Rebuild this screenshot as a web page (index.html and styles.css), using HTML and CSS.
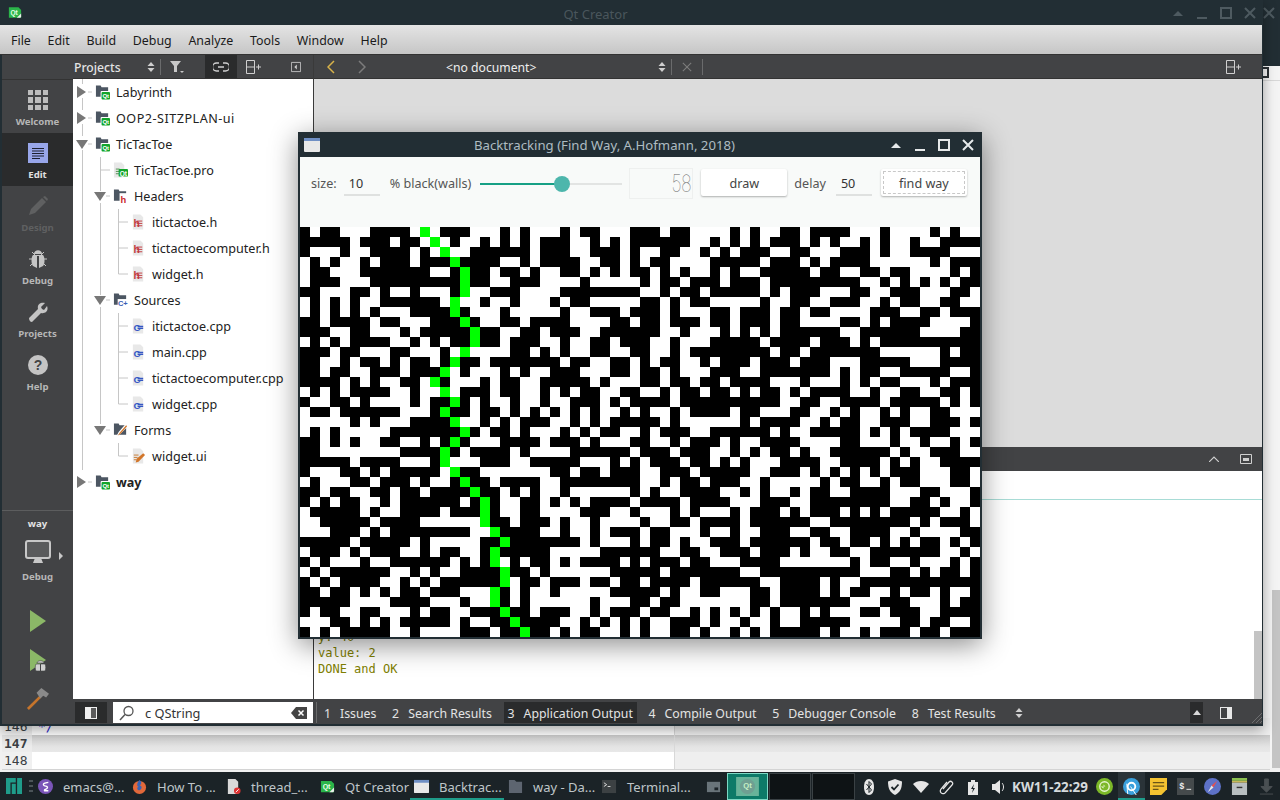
FILE: index.html
```html
<!DOCTYPE html>
<html lang="en">
<head>
<meta charset="utf-8">
<title>Qt Creator</title>
<link rel="stylesheet" href="styles.css">
</head>
<body>
<svg class="defs" width="0" height="0">
  <symbol id="qtfolder" viewBox="0 0 16 16"><path d="M1 1h5l1 2h7v10H1z" fill="#4c5662"/><rect x="6" y="7" width="10" height="9" rx="1" fill="#fff"/><rect x="7" y="8" width="9" height="8" rx="1" fill="#12a52b"/><text x="11.500" y="14.500" font-size="6.500" font-weight="700" text-anchor="middle" fill="#fff" font-family="Liberation Sans">Qt</text></symbol>
  <symbol id="hfolder" viewBox="0 0 16 16"><path d="M1 1h5l1 2h7v10H1z" fill="#4c5662"/><rect x="7" y="5" width="8" height="11" fill="#fff"/><text x="11" y="15" font-size="10" font-weight="700" text-anchor="middle" fill="#c9282d" font-family="Liberation Sans">h</text></symbol>
  <symbol id="cfolder" viewBox="0 0 16 16"><path d="M1 1h5l1 2h7v10H1z" fill="#4c5662"/><rect x="5" y="7" width="11" height="8" fill="#fff"/><text x="10.500" y="14" font-size="8" font-weight="700" text-anchor="middle" fill="#3b5fb5" font-family="Liberation Sans">C+</text></symbol>
  <symbol id="ffolder" viewBox="0 0 16 16"><path d="M1 1h5l1 2h7v10H1z" fill="#4c5662"/><path d="M4 14l2-4 7-8 3 2-8 8z" fill="#fff"/><path d="M5 14l2-3 7-8 1 1-7 8z" fill="#d2762a"/></symbol>
  <symbol id="pro" viewBox="0 0 16 16"><path d="M1 0h8l3 3v13H1z" fill="#e8e8e8"/><path d="M3 7h4M3 9.500h4M3 12h4" stroke="#4c8a4c" stroke-width="1"/><rect x="6" y="7" width="10" height="8" rx="1" fill="#12a52b"/><text x="11" y="14" font-size="7" font-weight="700" text-anchor="middle" fill="#fff" font-family="Liberation Sans">Qt</text></symbol>
  <symbol id="hfile" viewBox="0 0 16 16"><path d="M2 0h8l3 3v13H2z" fill="#e8e8e8"/><text x="6" y="13" font-size="11" font-weight="700" text-anchor="middle" fill="#c23a3e" font-family="Liberation Sans">h</text><path d="M6 7h6M6 9.500h6M6 12h6" stroke="#c23a3e"/></symbol>
  <symbol id="cfile" viewBox="0 0 16 16"><path d="M2 0h8l3 3v13H2z" fill="#e8e8e8"/><text x="6.500" y="13" font-size="10.500" font-weight="700" text-anchor="middle" fill="#3657c4" font-family="Liberation Sans">C</text><path d="M7 8.500h6M7 10.500h6" stroke="#3657c4" stroke-width="1.400"/></symbol>
  <symbol id="uifile" viewBox="0 0 16 16"><path d="M2 0h8l3 3v13H2z" fill="#e8e8e8"/><path d="M3 7h5M3 9.500h4M3 12h3" stroke="#c87a30"/><path d="M5 15l1-4 7-6 2 2-7 7z" fill="#d2762a"/></symbol>
  <symbol id="updown" viewBox="0 0 8 12"><path d="M4 1l3.500 4h-7z" fill="currentColor"/><path d="M4 11L.5 7h7z" fill="currentColor"/></symbol>
  <symbol id="splitplus" viewBox="0 0 15 14"><path d="M.5.5h8v13h-8zM.5 7h8" fill="none" stroke="currentColor"/><path d="M10 7h5M12.500 4.500v5" stroke="currentColor"/></symbol>
  <symbol id="panel" viewBox="0 0 14 14"><rect x="1" y="1" width="12" height="12" fill="#f0f0f0"/><rect x="7" y="2" width="5" height="10" fill="#5b5b5b"/></symbol>
</svg>

<div class="desktop">
  <div class="workspace">
    <section class="backwin">
      <div class="back-strip">
        <div class="back-strip-top"><svg class="back-x" viewBox="0 0 12 12"><path d="M1 1l10 10M11 1L1 11" stroke="currentColor" stroke-width="2"/></svg></div>
        <div class="back-strip-glyph"></div>
        <div class="back-strip-line"></div>
        <div class="back-scroll"></div>
      </div>
      <div class="code">
        <div class="code-row first"><span class="gutter">146</span><span class="code-text">*/</span></div>
        <div class="code-row cur"><span class="gutter bold">147</span><span class="code-text clear-bg"></span></div>
        <div class="code-row"><span class="gutter">148</span><span class="code-text"></span></div>
      </div>
    </section>

    <section class="qt">
      <header class="titlebar qt-title">
        <svg class="appicon" viewBox="0 0 16 14"><path d="M1 1h11l3 3v9H1z" fill="#2bb54a"/><path d="M10 13l5-5v4l-1 1z" fill="#e9efe9"/><text x="7" y="9.500" font-size="7.500" font-weight="700" text-anchor="middle" fill="#e8ffe8" font-family="Liberation Sans">Qt</text></svg>
        <span class="qt-title-text">Qt Creator</span>
        <div class="wm dim">
          <svg viewBox="0 0 12 12"><path d="M1 9l5-5 5 5z" fill="currentColor"/></svg>
          <svg viewBox="0 0 12 12"><path d="M1 10h10v2H1z" fill="currentColor"/></svg>
          <svg viewBox="0 0 12 12"><path d="M1 1h10v10H1z" fill="none" stroke="currentColor" stroke-width="2"/></svg>
          <svg viewBox="0 0 12 12"><path d="M1 1l10 10M11 1L1 11" stroke="currentColor" stroke-width="2"/></svg>
        </div>
      </header>
      <nav class="menubar">
        <span>File</span><span>Edit</span><span>Build</span><span>Debug</span><span>Analyze</span><span>Tools</span><span>Window</span><span>Help</span>
      </nav>
      <div class="qt-body">
        <aside class="sidebar">
          <div class="side-top"></div>
          <div class="mode">
            <svg class="mode-ico" viewBox="0 0 20 20"><path d="M0 0h5v5H0zM7 0h6v5H7zM15 0h5v5h-5zM0 7h5v6H0zM7 7h6v6H7zM15 7h5v6h-5zM0 15h5v5H0zM7 15h6v5H7zM15 15h5v5h-5z" fill="#bdbdbd"/></svg>
            <span>Welcome</span>
          </div>
          <div class="mode active">
            <svg class="mode-ico" viewBox="0 0 20 20"><rect width="20" height="20" fill="#98a6ea"/><path d="M4 5.500h12M4 8h12M4 10.500h12M4 13h12M4 15.500h8" stroke="#1c2030"/></svg>
            <span>Edit</span>
          </div>
          <div class="mode off">
            <svg class="mode-ico" viewBox="0 0 20 20"><path d="M1 19l2-6L14 2l4 4L7 17z" fill="#5f6061"/><path d="M15 1l4 4 1-2-3-3z" fill="#5f6061"/></svg>
            <span>Design</span>
          </div>
          <div class="mode">
            <svg class="mode-ico" viewBox="0 0 20 20"><path d="M6 5c0-5 8-5 8 0zM5 6h10c2 2 2 9 0 11l-4 2V7H9v12l-4-2C3 15 3 8 5 6z" fill="#c4c4c4"/><path d="M4 3l3 3M16 3l-3 3M1 10h3M16 10h3M2 17l3-3M18 17l-3-3" stroke="#c4c4c4"/></svg>
            <span>Debug</span>
          </div>
          <div class="mode">
            <svg class="mode-ico" viewBox="0 0 20 20"><path d="M1 16L10 7c-1-4 2-7 7-6l-4 4 1 2 2 1 3-4c2 5-2 8-6 7l-9 9c-2 0-3-2-3-4z" fill="#c4c4c4"/></svg>
            <span>Projects</span>
          </div>
          <div class="mode">
            <svg class="mode-ico" viewBox="0 0 20 20"><circle cx="10" cy="10" r="10" fill="#c4c4c4"/><text x="10" y="15" font-size="14" font-weight="700" text-anchor="middle" fill="#424345" font-family="Liberation Sans">?</text></svg>
            <span>Help</span>
          </div>
          <div class="kit">
            <span class="kit-name">way</span>
            <div class="kit-mon">
              <svg class="monitor" viewBox="0 0 26 24"><rect x="1" y="1" width="24" height="17" rx="2" fill="#5a5b5c" stroke="#c8c8c8" stroke-width="2"/><path d="M10 18h6l2 5H8z" fill="#c8c8c8"/></svg>
              <svg class="kit-arrow" viewBox="0 0 6 8"><path d="M1 0l4 4-4 4z" fill="#c8c8c8"/></svg>
            </div>
            <span class="kit-cfg">Debug</span>
          </div>
          <div class="action"><svg viewBox="0 0 20 24"><path d="M2 1l16 11L2 23z" fill="#8bb867"/></svg></div>
          <div class="action"><svg viewBox="0 0 20 24"><path d="M2 1l16 11L2 23z" fill="#8bb867"/><path d="M9 15c0-3 7-3 7 0zM8 16h9c1 2 1 5 0 7H8c-1-2-1-5 0-7z" fill="#d0d0d0" stroke="#424345" stroke-width=".6"/><path d="M12.500 16v7" stroke="#424345"/></svg></div>
          <div class="action"><svg class="hammer" viewBox="0 0 24 24"><path d="M1 22l13-13 2 2L3 24z" fill="#c6752c"/><path d="M11 6l5-5 8 6-3 4-3-2-3 3z" fill="#8a8a8a"/></svg></div>
        </aside>
        <main class="main">
          <div class="panes">
            <div class="tree-col">
              <div class="toolbar">
                <span class="tb-title">Projects</span>
                <svg class="ud"><use href="#updown"/></svg>
                <i class="tb-sep"></i>
                <svg class="tb-filter" viewBox="0 0 14 12"><path d="M0 0h11L7 5v6H4V5z" fill="#c8c8c8"/><path d="M10 10h4l-2 2z" fill="#c8c8c8"/></svg>
                <span class="tb-link"><svg viewBox="0 0 16 10"><path d="M6 1H3.500a4 4 0 000 8H6M10 1h2.500a4 4 0 010 8H10M5 5h6" fill="none" stroke="#cfcfcf" stroke-width="1.400"/></svg></span>
                <svg class="tb-split"><use href="#splitplus"/></svg>
                <svg class="tb-close" viewBox="0 0 12 12"><path d="M.5.5h11v11H.5z" fill="none" stroke="#cfcfcf"/><path d="M7 3v6L4 6z" fill="#cfcfcf"/></svg>
              </div>
              <div class="tree">
                <svg class="guides" width="240" height="620">
                  <path d="M9.500 0v5M9.500 19v12M9.500 45v12M9.500 71v320M27.500 78v34M27.500 124v92M27.500 228v117M45.500 130v65M45.500 234v91M45.500 364v13M27.500 91H37M45.500 143H55M45.500 169H55M45.500 195H55M45.500 247H55M45.500 273H55M45.500 299H55M45.500 325H55M45.500 377H55M15 13h4M15 39h4M15 65h4M15 403h4M33 117h4M33 221h4M33 351h4" fill="none" stroke="#c6c6c6"/>
                </svg>
                <div class="row d0"><i class="tw r"></i><svg class="fi"><use href="#qtfolder"/></svg><span>Labyrinth</span></div>
                <div class="row d0"><i class="tw r"></i><svg class="fi"><use href="#qtfolder"/></svg><span class="caps">OOP2-SITZPLAN-ui</span></div>
                <div class="row d0"><i class="tw o"></i><svg class="fi"><use href="#qtfolder"/></svg><span>TicTacToe</span></div>
                <div class="row d1"><i class="tw"></i><svg class="fi"><use href="#pro"/></svg><span>TicTacToe.pro</span></div>
                <div class="row d1"><i class="tw o"></i><svg class="fi"><use href="#hfolder"/></svg><span>Headers</span></div>
                <div class="row d2"><i class="tw"></i><svg class="fi"><use href="#hfile"/></svg><span>itictactoe.h</span></div>
                <div class="row d2"><i class="tw"></i><svg class="fi"><use href="#hfile"/></svg><span>tictactoecomputer.h</span></div>
                <div class="row d2"><i class="tw"></i><svg class="fi"><use href="#hfile"/></svg><span>widget.h</span></div>
                <div class="row d1"><i class="tw o"></i><svg class="fi"><use href="#cfolder"/></svg><span>Sources</span></div>
                <div class="row d2"><i class="tw"></i><svg class="fi"><use href="#cfile"/></svg><span>itictactoe.cpp</span></div>
                <div class="row d2"><i class="tw"></i><svg class="fi"><use href="#cfile"/></svg><span>main.cpp</span></div>
                <div class="row d2"><i class="tw"></i><svg class="fi"><use href="#cfile"/></svg><span>tictactoecomputer.cpp</span></div>
                <div class="row d2"><i class="tw"></i><svg class="fi"><use href="#cfile"/></svg><span>widget.cpp</span></div>
                <div class="row d1"><i class="tw o"></i><svg class="fi"><use href="#ffolder"/></svg><span>Forms</span></div>
                <div class="row d2"><i class="tw"></i><svg class="fi"><use href="#uifile"/></svg><span>widget.ui</span></div>
                <div class="row d0 strong"><i class="tw r"></i><svg class="fi"><use href="#qtfolder"/></svg><span>way</span></div>
              </div>
            </div>
            <div class="edit-col">
              <div class="toolbar doc-bar">
                <svg class="nav" viewBox="0 0 8 14"><path d="M7 1L1 7l6 6" fill="none" stroke="#d8b34a" stroke-width="1.500"/></svg>
                <svg class="nav next" viewBox="0 0 8 14"><path d="M1 1l6 6-6 6" fill="none" stroke="#7c7c7c" stroke-width="1.500"/></svg>
                <span class="doc-name">&lt;no document&gt;</span>
                <svg class="ud"><use href="#updown"/></svg>
                <i class="tb-sep"></i>
                <svg class="doc-x" viewBox="0 0 12 12"><path d="M1 1l10 10M11 1L1 11" stroke="#7c7c7c" stroke-width="1.300"/></svg>
                <i class="tb-sep"></i>
                <svg class="tb-split right"><use href="#splitplus"/></svg>
              </div>
              <div class="editor"></div>
              <div class="toolbar out-bar">
                <svg class="out-up" viewBox="0 0 10 6"><path d="M0 6l5-5 5 5" fill="none" stroke="#cfcfcf" stroke-width="1.200"/></svg>
                <svg class="out-panel" viewBox="0 0 12 10"><path d="M.5.5h11v9H.5z" fill="none" stroke="#cfcfcf"/><path d="M3 4h6v3H3z" fill="#cfcfcf"/></svg>
              </div>
              <div class="out-filter"></div>
              <div class="output">
                <pre class="log">y: 40
value: 2
DONE and OK</pre>
                <div class="out-scroll"></div>
              </div>
            </div>
          </div>
          <footer class="status">
            <span class="st-toggle"><svg><use href="#panel"/></svg></span>
            <div class="search">
              <svg class="mag" viewBox="0 0 16 16"><circle cx="9.500" cy="6" r="4.500" fill="none" stroke="#555" stroke-width="1.300"/><path d="M6 9.500L1 15" stroke="#555" stroke-width="1.500"/></svg>
              <span class="search-text">c QString</span>
              <svg class="clear" viewBox="0 0 16 12"><path d="M0 6l5-6h11v12H5z" fill="#444"/><path d="M7.500 3.500l5 5M12.500 3.500l-5 5" stroke="#fff" stroke-width="1.500"/></svg>
            </div>
            <div class="tabs">
              <span class="tab"><b>1</b>Issues</span>
              <span class="tab"><b>2</b>Search Results</span>
              <span class="tab sel"><b>3</b>Application Output</span>
              <span class="tab"><b>4</b>Compile Output</span>
              <span class="tab"><b>5</b>Debugger Console</span>
              <span class="tab"><b>8</b>Test Results</span>
              <svg class="ud tabs-ud"><use href="#updown"/></svg>
            </div>
            <span class="st-up"><svg viewBox="0 0 8 6"><path d="M4 0l4 5H0z" fill="#d8d8d8"/></svg></span>
            <svg class="st-panel" viewBox="0 0 12 12"><rect width="12" height="12" fill="#e8e8e8"/><rect x="1" y="1" width="6" height="10" fill="#424345"/></svg>
            <svg class="grip" viewBox="0 0 10 10"><path d="M0 10L10 0M4 10l6-6M8 10l2-2" stroke="#6d6e70"/></svg>
          </footer>
        </main>
      </div>
    </section>

    <section class="app">
      <header class="titlebar app-title">
        <svg class="win-ico" viewBox="0 0 16 14"><rect width="16" height="14" rx="1" fill="#e8e8e8"/><rect width="16" height="3" fill="#6f8fc4"/></svg>
        <span class="app-title-text">Backtracking (Find Way, A.Hofmann, 2018)</span>
        <div class="wm">
          <svg viewBox="0 0 12 12"><path d="M1 9l5-5 5 5z" fill="currentColor"/></svg>
          <svg viewBox="0 0 12 12"><path d="M1 10h10v2H1z" fill="currentColor"/></svg>
          <svg viewBox="0 0 12 12"><path d="M1 1h10v10H1z" fill="none" stroke="currentColor" stroke-width="2"/></svg>
          <svg viewBox="0 0 12 12"><path d="M1 1l10 10M11 1L1 11" stroke="currentColor" stroke-width="2"/></svg>
        </div>
      </header>
      <div class="controls">
        <span class="lbl">size:</span>
        <span class="field f1">10</span>
        <span class="lbl l2">% black(walls)</span>
        <div class="slider"><i class="fill"></i><i class="knob"></i></div>
        <span class="lcd"><b>58</b></span>
        <span class="btn draw">draw</span>
        <span class="lbl l3">delay</span>
        <span class="field f2">50</span>
        <span class="btn find"><em>find way</em></span>
      </div>
      <canvas id="maze" width="680" height="410"></canvas>
    </section>
  </div>

  <footer class="taskbar">
    <svg class="manjaro" viewBox="0 0 18 18"><path d="M0 0h11v5H5v13H0zM6.500 6.500H11V18H6.500zM12.500 0H18v18h-5.500z" fill="#1f9c8a"/></svg>
    <svg class="handle" viewBox="0 0 4 12"><path d="M0 1h4M0 6h4M0 11h4" stroke="#7d8589"/></svg>
    <div class="task"><svg viewBox="0 0 16 16"><circle cx="8" cy="8" r="8" fill="#7a55b8"/><path d="M11 3.500C7 4 5 5 6 6.500s5 1 4 3-4 1.500-3 3l4 0" fill="none" stroke="#fff" stroke-width="1.400"/></svg><span>emacs@...</span></div>
    <div class="task"><svg viewBox="0 0 16 16"><circle cx="8" cy="9" r="7" fill="#e2683a"/><path d="M8 1c3 2 2 5 0 6 3 0 3 4 0 5-3 0-3-3-1-4-2 0-2-4 1-7z" fill="#3764b8"/></svg><span>How To ...</span></div>
    <div class="task"><svg viewBox="0 0 16 16"><path d="M2 0h8l3 3v13H2z" fill="#d9d9d9"/><circle cx="12" cy="12.500" r="3.500" fill="#dd3232"/><path d="M10.500 14l3-3" stroke="#fff"/></svg><span>thread_...</span></div>
    <div class="task"><svg viewBox="0 0 16 14"><path d="M1 1h11l3 3v9H1z" fill="#2bb54a"/><path d="M10 13l5-5v4l-1 1z" fill="#e9efe9"/><text x="7" y="9.500" font-size="7.500" font-weight="700" text-anchor="middle" fill="#e8ffe8" font-family="Liberation Sans">Qt</text></svg><span>Qt Creator</span></div>
    <div class="task on"><svg viewBox="0 0 16 14"><rect width="16" height="14" rx="1" fill="#e8e8e8"/><rect width="16" height="3" fill="#6f8fc4"/></svg><span>Backtrac...</span></div>
    <div class="task"><svg viewBox="0 0 16 14"><path d="M1 0h6l2 2h6v12H1z" fill="#5d6570"/></svg><span>way - Da...</span></div>
    <div class="task"><svg viewBox="0 0 16 14"><rect width="15" height="14" fill="#3c4143"/><path d="M2 3l3 2-3 2M6 7h3" stroke="#ddd" fill="none"/></svg><span>Terminal...</span></div>
    <div class="task last"><svg viewBox="0 0 16 14"><path d="M1 2h14v11H1z" fill="#69747a"/><rect x="9" y="8" width="4" height="3" fill="#1b2327"/></svg></div>
    <div class="pager">
      <div class="desk cur"><span class="thumb"><svg viewBox="0 0 24 20"><rect width="24" height="20" fill="#69b39a"/><circle cx="12" cy="10" r="8" fill="#6f9f92"/><text x="12" y="12" font-size="8" font-weight="700" text-anchor="middle" fill="#c6f0c6" font-family="Liberation Sans">Qt</text></svg></span></div>
      <div class="desk d2nd"></div>
      <div class="desk d3rd"></div>
    </div>
    <div class="tray">
      <svg viewBox="0 0 16 16"><path d="M8 0c3 0 5 3 5 8s-2 8-5 8-5-3-5-8 2-8 5-8z" fill="#e6e6e6"/><path d="M5.500 5l5 6-2.500 2.500v-11L10.500 5l-5 6" fill="none" stroke="#1b2327"/></svg>
      <svg viewBox="0 0 16 16"><path d="M8 0l7 2.500c0 7-2 11-7 13.500C3 13.500 1 9.500 1 2.500z" fill="#e6e6e6"/><path d="M4.500 8l2.500 2.500 4.500-5" fill="none" stroke="#1b2327" stroke-width="1.800"/></svg>
      <svg viewBox="0 0 16 16"><path d="M0 5c4-4 12-4 16 0l-8 9z" fill="#e6e6e6"/></svg>
      <svg viewBox="0 0 16 16"><path d="M4 10l6-7c2-2 5 1 3 3l-7 8c-3 2-6-1-4-4l6-7" fill="none" stroke="#e6e6e6" stroke-width="1.200"/></svg>
      <svg viewBox="0 0 16 16"><path d="M3 3h3V1h4v2h3v13H3z" fill="#e6e6e6"/><path d="M9 5L6 10h2l-1 4 3-5H8z" fill="#1b2327"/></svg>
      <svg viewBox="0 0 16 16"><path d="M1 5h3l5-4v14l-5-4H1z" fill="#e6e6e6"/><path d="M11 4c2 2 2 6 0 8" fill="none" stroke="#e6e6e6"/></svg>
    </div>
    <span class="clock">KW11-22:29</span>
    <div class="apps">
      <span><svg viewBox="0 0 18 18"><circle cx="9" cy="9" r="9" fill="#7cb828"/><circle cx="9" cy="9" r="5" fill="none" stroke="#e8f5d0" stroke-width="1.500"/><path d="M5 9h5l-2-2v4z" fill="#e8f5d0"/></svg></span>
      <span class="run"><svg viewBox="0 0 18 18"><circle cx="9" cy="9" r="9" fill="#3aa0dc"/><circle cx="9" cy="9" r="4" fill="none" stroke="#fff" stroke-width="2"/><path d="M4 6l1 11M8 9l6 9" stroke="#fff"/></svg></span>
      <span><svg viewBox="0 0 18 18"><path d="M0 0h18v12l-6 6H0z" fill="#f5c331"/><path d="M3 5h12M3 8.500h12M3 12h6" stroke="#6a5518" stroke-width="1.300"/></svg></span>
      <span><svg viewBox="0 0 18 18"><rect width="18" height="18" fill="#454a4c"/><text x="5" y="12" font-size="9" font-weight="700" text-anchor="middle" fill="#eee" font-family="Liberation Mono">$</text><path d="M10 12h5" stroke="#eee"/></svg></span>
      <span><svg viewBox="0 0 18 18"><circle cx="9" cy="9" r="9" fill="#5e72c8"/><path d="M14 3L10 10 8 8z" fill="#e65050"/><path d="M4 15l4-7 2 2z" fill="#e8e8e8"/></svg></span>
      <span><svg viewBox="0 0 18 18"><path d="M1 0h16v3H1z" fill="#8cc152"/><path d="M1 3h16v2H1z" fill="#c8b85a"/><path d="M1 5h16v13H1z" fill="#b8bec0"/><path d="M6 10h6" stroke="#333" stroke-width="1.500"/></svg></span>
      <span><svg viewBox="0 0 18 18"><path d="M7 1h4v8h4l-6 6-6-6h4zM2 17h14" fill="#4a5053" stroke="#4a5053"/></svg></span>
    </div>
  </footer>
</div>
<script src="maze.js"></script>
</body>
</html>
```

FILE: styles.css
```css
* { box-sizing: border-box; }
html, body { margin: 0; height: 100%; }
body {
  width: 1280px;
  height: 800px;
  overflow: hidden;
  font-family: "Noto Sans", sans-serif;
  font-size: 12.6px;
  background: #1b2327;
}
svg { display: block; flex: none; }
.defs { position: absolute; }
.desktop { display: flex; flex-direction: column; width: 1280px; height: 800px; }
.workspace { position: relative; height: 772px; flex: none; overflow: hidden; }

/* window behind */
.backwin { position: absolute; inset: 0; background: #f1f1f1; }
.back-strip { position: absolute; left: 1263px; top: 0; width: 17px; height: 768px; background: #f4f4f4; }
.back-strip-top { height: 66px; background: #222e34; overflow: hidden; padding: 7px 0 0 0; color: #4e5a60; }
.back-x { width: 12px; height: 12px; }
.back-strip-glyph { width: 6px; height: 11px; margin-top: 1px; border: 2px solid #2a2f33; border-left: 0; }
.back-strip-line { height: 1px; margin-top: 2px; background: #d8d8d8; }
.back-scroll { position: absolute; right: 0; top: 590px; width: 8px; height: 178px; background: #c4c4c4; }
.code { position: absolute; left: 2px; top: 718px; width: 1268px; font-family: "DejaVu Sans Mono", monospace; font-size: 13px; color: #3a3f44; border-bottom: 1px solid #d4d4d4; }
.code-row { display: flex; height: 17px; line-height: 17px; background: #efefef; }
.code-row.cur { background: linear-gradient(#c8c8c8, #e4e4e4 70%, #e8e8e8); }
.gutter { width: 30px; padding-left: 2px; background: rgba(240, 240, 240, .6); }
.gutter.bold { font-weight: 700; }
.code-text { flex: none; width: 643px; padding-left: 6px; color: #1a1ac8; background: #fff; border-right: 1px solid #d8d8d8; }
.code-text.clear-bg { background: transparent; }

/* Qt Creator */
.qt {
  position: absolute; left: 0; top: 0; width: 1263px; height: 726px;
  display: flex; flex-direction: column;
  background: #222e34;
  padding: 0 1px 2px 2px;
  box-shadow: 0 4px 12px rgba(0, 0, 0, .35);
}
.titlebar { display: flex; align-items: center; background: #222e34; flex: none; position: relative; }
.qt-title { height: 25px; margin: 0 -1px 0 -2px; padding-left: 8px; }
.appicon { width: 14px; height: 13px; }
.qt-title-text { position: absolute; left: 0; right: 72px; top: 5px; text-align: center; color: #4a565c; font-size: 13px; line-height: 18px; }
.wm { margin-left: auto; display: flex; align-items: center; gap: 12px; color: #e6e9ea; position: relative; }
.wm svg { width: 12px; height: 12px; }
.wm.dim { color: #4e5a60; padding-right: 7px; }
.menubar {
  height: 30px; flex: none; display: flex; align-items: center;
  padding: 3px 0 0 9px;
  margin-left: -2px; width: 1262px;
  background: linear-gradient(#e4e4e4, #c6c6c6);
  border-bottom: 1px solid #333;
  color: #1a1a1a;
  font-size: 12.4px;
}
.menubar span { padding: 0 2px; margin-right: 12.7px; line-height: 18px; }
.qt-body { flex: 1; display: flex; min-height: 0; }
.sidebar { width: 71px; flex: none; display: flex; flex-direction: column; background: #424345; color: #b6b6b6; font-size: 9.6px; font-weight: 700; }
.side-top { height: 25px; flex: none; border-bottom: 1px solid #333; }
.mode { height: 53px; flex: none; display: flex; flex-direction: column; align-items: center; padding-top: 10px; }
.mode-ico { width: 20px; height: 20px; margin-bottom: 4px; }
.mode span { line-height: 14px; margin-top: 1px; }
.mode.active { background: #2a2b2c; color: #e0e0e0; }
.mode.off { color: #5f6061; }
.kit { margin-top: 112px; border-top: 1px solid #5c5d5e; height: 91px; display: flex; flex-direction: column; align-items: center; padding-top: 6px; color: #b6b6b6; }
.kit-name { color: #e4e4e4; line-height: 14px; }
.kit-mon { display: flex; align-items: center; margin-top: 9px; position: relative; }
.monitor { width: 26px; height: 24px; }
.kit-arrow { width: 6px; height: 8px; position: absolute; left: 33px; top: 12px; }
.kit-cfg { margin-top: 6px; line-height: 14px; }
.action { height: 39px; flex: none; display: flex; align-items: center; justify-content: center; }
.action svg { width: 20px; height: 24px; }
.action .hammer { width: 23px; height: 23px; }

.main { flex: 1; display: flex; flex-direction: column; min-width: 0; }
.panes { flex: 1; display: flex; min-height: 0; }
.tree-col { width: 241px; flex: none; display: flex; flex-direction: column; background: #fff; border-right: 1px solid #3a3a3a; }
.toolbar { height: 24px; flex: none; display: flex; align-items: center; background: #424345; color: #cfcfcf; border-bottom: 1px solid #333; font-size: 12.2px; }
.tb-title { color: #e4e4e4; font-weight: 500; margin: 2px 0 0 1px; width: 73px; }
.ud { width: 8px; height: 12px; color: #cfcfcf; }
.tb-sep { width: 1px; height: 16px; background: #6a6b6c; margin-left: 5px; flex: none; }
.tb-filter { width: 14px; height: 12px; margin-left: 9px; }
.tb-link { width: 32px; height: 23px; background: #2a2b2c; margin-left: 21px; display: flex; align-items: center; justify-content: center; }
.tb-link svg { width: 16px; height: 10px; }
.tb-split { width: 15px; height: 14px; margin-left: 9px; color: #cfcfcf; }
.tb-close { width: 10px; height: 12px; margin-left: 30px; }
.tree { position: relative; flex: 1; color: #222; overflow: hidden; }
.guides { position: absolute; left: 0; top: 0; }
.row { position: relative; height: 26px; display: flex; align-items: center; line-height: 18px; white-space: nowrap; }
.row span { margin-top: 2px; }
.d1 { padding-left: 18px; }
.d2 { padding-left: 36px; }
.strong { font-weight: 700; }
.caps { letter-spacing: .5px; }
.tw { width: 18px; flex: none; height: 12px; position: relative; }
.tw.r::before { content: ""; position: absolute; left: 4px; top: 0; border-left: 9px solid #777; border-top: 6px solid transparent; border-bottom: 6px solid transparent; }
.tw.o::before { content: ""; position: absolute; left: 3px; top: 2px; border-top: 9px solid #777; border-left: 6px solid transparent; border-right: 6px solid transparent; }
.fi { width: 15px; height: 16px; margin: 0 6px 0 4px; }

.edit-col { flex: 1; min-width: 0; display: flex; flex-direction: column; }
.doc-bar { padding-left: 13px; }
.nav { width: 8px; height: 14px; }
.nav.next { margin-left: 23px; }
.doc-name { color: #eee; margin: 2px 0 0 80px; width: 212px; }
.doc-x { width: 10px; height: 10px; margin-left: 10px; }
.doc-x + .tb-sep { margin-left: 10px; }
.tb-split.right { margin-left: auto; margin-right: 21px; }
.editor { height: 368px; flex: none; background: #dcdcdc; }
.out-bar { justify-content: flex-end; height: 24px; background: #424345; border-bottom: 0; }
.out-up { width: 10px; height: 6px; margin-right: 21px; }
.out-panel { width: 12px; height: 10px; margin-right: 10px; }
.out-filter { height: 29px; flex: none; background: #fff; border-bottom: 1px solid #a8dcd6; }
.output { flex: 1; min-height: 0; background: #fff; position: relative; overflow: hidden; }
.log { position: absolute; left: 4px; bottom: 22px; margin: 0; font-family: "DejaVu Sans Mono", monospace; font-size: 12px; line-height: 16px; color: #808000; }
.out-scroll { position: absolute; right: 0; bottom: 0; width: 8px; height: 68px; background: #c4c4c4; }
.status { height: 25px; flex: none; display: flex; align-items: center; padding-top: 2px; background: #424345; color: #e4e4e4; font-size: 12.3px; }
.st-toggle { width: 32px; height: 21px; margin-left: 2px; background: #2a2b2c; display: flex; align-items: center; justify-content: center; }
.st-toggle svg { width: 14px; height: 14px; }
.search { width: 200px; height: 21px; margin-left: 6px; background: #fff; display: flex; align-items: center; padding: 0 6px; color: #333; font-size: 12.8px; }
.mag { width: 16px; height: 16px; }
.search-text { margin-left: 10px; flex: 1; }
.clear { width: 16px; height: 12px; }
.tabs { display: flex; align-items: center; margin-left: 3px; border-left: 1px solid #6a6b6c; height: 21px; padding-left: 3px; flex: 1; }
.tab { display: flex; align-items: center; height: 21px; padding: 1px 4px 0; margin-right: 7.7px; white-space: nowrap; }
.tab b { font-weight: 400; margin-right: 9px; }
.tab.sel { background: #2a2b2c; }
.tabs-ud { margin-left: 8px; }
.st-up { width: 13px; height: 21px; background: #2a2b2c; display: flex; align-items: center; justify-content: center; }
.st-up svg { width: 8px; height: 6px; }
.st-panel { width: 12px; height: 12px; margin-left: 17px; }
.grip { width: 10px; height: 10px; margin: 10px 0 0 20px; }

/* Backtracking window */
.app {
  position: absolute; left: 298px; top: 132px; width: 684px; height: 507px;
  background: #f8faf9; border: 2px solid #222e34; border-top: 0;
  box-shadow: 0 6px 26px rgba(0, 0, 0, .45);
  display: flex; flex-direction: column;
}
.app-title { height: 25px; margin: 0 -2px; padding-left: 6px; }
.win-ico { width: 16px; height: 14px; }
.app-title-text { position: absolute; left: 0; right: 71px; top: 4px; text-align: center; color: #aebcc2; line-height: 18px; font-size: 13.2px; }
.app .wm { padding-right: 8px; }
.controls { height: 70px; flex: none; display: flex; align-items: flex-start; padding: 11px 0 0 11px; color: #555; position: relative; }
.lbl { line-height: 32px; }
.field { width: 36px; height: 28px; line-height: 32px; padding-left: 5px; margin-left: 7px; color: #333; border-bottom: 2px solid #dfe1e0; }
.l2 { margin-left: 10px; }
.slider { width: 142px; height: 2px; margin: 15px 0 0 9px; background: #e2e4e3; position: relative; }
.fill { position: absolute; left: 0; top: 0; width: 82px; height: 2px; background: #16a085; }
.knob { position: absolute; left: 74px; top: -7px; width: 16px; height: 16px; border-radius: 50%; background: #4db6ac; }
.lcd { width: 64px; height: 31px; margin-left: 7px; border: 1px solid #eef0ef; text-align: right; padding-right: 1px; font-family: "Inter", sans-serif; font-size: 24px; letter-spacing: -1px; line-height: 29px; color: #666; }
.lcd b { display: block; font-weight: 100; transform: scaleX(.75); transform-origin: right center; }
.btn { width: 86px; height: 27px; margin-top: 1px; background: #fff; border-radius: 2px; box-shadow: 0 1px 2px rgba(0, 0, 0, .3); text-align: center; line-height: 29px; color: #444; }
.draw { margin-left: 8px; }
.l3 { margin-left: 7px; }
.f2 { margin-left: 10px; }
.find { margin-left: 9px; padding: 2px; }
.find em { display: block; height: 23px; line-height: 23px; font-style: normal; border: 1px dashed #c8c8c8; }
#maze { display: block; width: 680px; height: 410px; }

/* Task bar */
.taskbar { height: 28px; flex: none; display: flex; align-items: center; background: #1b2327; color: #bfc6c9; font-size: 13px; }
.manjaro { width: 16px; height: 16px; margin-left: 6px; }
.handle { width: 4px; height: 12px; margin: 0 1px 0 7px; }
.task { width: 94px; height: 28px; flex: none; display: flex; align-items: center; padding: 3px 0 0 4px; white-space: nowrap; border-bottom: 2px solid transparent; }
.task svg { width: 15px; height: 15px; margin-right: 10px; }
.task.on { border-bottom-color: #1f9c8a; }
.task.last { width: 35px; padding-left: 14px; }
.pager { display: flex; gap: 1px; height: 28px; padding-top: 1px; }
.desk { width: 41px; height: 27px; background: #0e1315; border: 1px solid #3a4144; }
.desk.d2nd { width: 42px; }
.desk.d3rd { width: 43px; }
.desk.cur { background: #0d7a68; border: 1px solid #7dd8c4; padding: 3px 7px; }
.thumb svg { width: 25px; height: 19px; }
.tray { display: flex; align-items: center; margin-left: 1px; padding-top: 2px; }
.tray svg { width: 16px; height: 16px; margin: 0 5px; }
.clock { width: 79px; flex: none; font-weight: 700; white-space: nowrap; color: #d5dadc; font-size: 13.4px; padding-top: 2px; }
.apps { display: flex; align-items: center; height: 28px; }
.apps span { width: 27px; height: 28px; display: flex; align-items: center; justify-content: center; border-bottom: 2px solid transparent; padding-top: 2px; }
.apps svg { width: 17px; height: 17px; }
.apps .run { background: #2a3338; border-bottom-color: #1f9c8a; }
```

FILE: maze.js
```js
var left = [
"#.##...####.G.###...#.#...#.##...#",
"#####.###.##.G.#..#.#.#.###..#.#.#",
"#...#..####.#.G..######.###..###.#",
".#.#..#.###.###G####..#.####..##.#",
".##...#######..#G##.##.#..##.#.#.#",
".###...#########G##..###....#.....",
"##...##.#..#...#G..###....########",
".#.#.#..######.G..#..#...#.##.....",
".#.#.#.#...####G#...#.....#..###.#",
"##.####.##...###G#..##.####....##.",
"###..##...#.#####G##..##.###..####",
".#.#.####..#.#.##G##.###..#..##.##",
"###.##...##...#.G....##.#.#..##..#",
"##..#.##.#.##.#G##.#######.##..##.",
"##.##..###.###G.#...#.#..###...##.",
"####.#.#..##.G#...#.##..#####.#...",
".#.#.####..#..G.###.##..#.#.##..##",
"#..##.#....#.##G#.#..#..#..###.#.#",
".##.######...#G##.##.#.#.#.#.#..#.",
".....#.#...####G..#.#.###..#.#.###",
".#.#.....#######G#.##.#...#.#.##..",
"##.#.#..##..#.#G#...####.###.#...#",
"##........####G#.####.#....######.",
"#####.####...#G...###..#####...#.#",
"#...##.#.#####.G##.......##.##.###",
".#...##.###.#..#G##.####..########",
"##.##..##.##.####G##.#.#..#......#",
"#.#.##..#.######.#G#..##.#.#.####.",
".#####.#..####.###G#..##....###..#",
"..#####.####......G##.###.#..#....",
"...###.#.########..G####..#..#.###",
"#####.#####.#.....##G#######.#...#",
".###.#.###..#.##..#G#####.....####",
"#.#...#..######.#.#G.#.##.#.####.#",
".#.######..#.#..####G##.#......###",
"#.#.####..#.#.######G.##.###.##.##",
"##.##.#.#.##.###...G#.#..#.....###",
"#####....####...#..G#.#......#...#",
"#.##..##...#.##..###G##.###..#.###",
"...##.#.#.#####.#..##G####..#.#.#.",
"#.#.#####..#....###.##G##.#.##..#."
];
var right = [
"##.##....#.#..##.####...#....#.#..",
"#####..#.#.#.###.#.#..#.#..#..####",
"..##..#.#.###..##...###.#..####...",
".##....#####.###.#.####......#.###",
"#.#.#..#.#..#####.##..##.##....#.#",
"#.##.###.###.#########..#.#.#.#.##",
"..#.##.#####.#.###...##..###...##.",
"##.#.##.....#..##..###..#.##..##..",
"##.#...##.###.##.##....###..##.###",
"##.###.##.###.##....##.#.####....#",
"##..#...#.#.#.######..######....##",
"#..#...#####.####.###.#.##########",
"#..#.########.##.#######......#.##",
"#.##..#.###.###.###...#####...####",
"##.#...###..#######.#.##..#####..#",
"##.##.##.####...#...#.#.##...#.###",
"..#.##.##.#.##.#.####..#..##..##.#",
"###.##########..##..####.#####.#.#",
"#..#.####.##...##..#.#..#.#..##...",
"##.#......#.####..#.##..###..###.#",
"#.###..######.#..#####.#.#.####...",
"#..#.###.#..####....##...#..#..#.#",
"###.###..#.#.##.#..######.#..###..",
".###.##.#.#...####..####.#.#..####",
"..###.#####..###.#.#.#.#.###...##.",
"..#.##.###..#.....#.##..#.##...##.",
".#..####..#.#..#.##..####...##...#",
"####.####...###..########..##.#..#",
"...#.#...#.###.#.###.#.#.#####..#.",
"#..##.####.######..########.#.###.",
".##...#..#..###..##..####..#....##",
".##.#..###.######.##.##.#.#.##.#.#",
"##..##..###.###.#..##..#######..#.",
".###.##...####.......#.##..#...#.#",
"##.#######..##########...##.#.##.#",
".####.######..####.#..############",
"##.#..##...##.####.#.##..#.##.#..#",
"#.##.......##.#######...###...#.##",
".##..#.#.#.#.#..#.#...##.###..####",
"#..###.#..#..#..#####.....##.##..#",
"#..##.#..#.#.#####.#..#.###.##.###"
];
var ctx = document.getElementById("maze").getContext("2d");
ctx.fillStyle = "#fff";
ctx.fillRect(0, 0, 680, 410);
left.forEach(function (l, y) {
  (l + right[y]).split("").forEach(function (c, x) {
    if (c === ".") return;
    ctx.fillStyle = c === "G" ? "#00ff00" : "#000";
    ctx.fillRect(x * 10, y * 10, 10, 10);
  });
});
```
